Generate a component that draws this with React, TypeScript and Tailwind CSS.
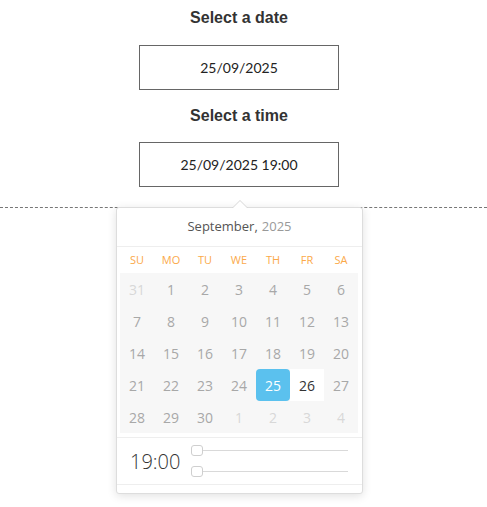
import React from "react";

const dayNames = ["SU", "MO", "TU", "WE", "TH", "FR", "SA"];
const weeks: { d: number; out?: boolean }[][] = [
  [{ d: 31, out: true }, { d: 1 }, { d: 2 }, { d: 3 }, { d: 4 }, { d: 5 }, { d: 6 }],
  [{ d: 7 }, { d: 8 }, { d: 9 }, { d: 10 }, { d: 11 }, { d: 12 }, { d: 13 }],
  [{ d: 14 }, { d: 15 }, { d: 16 }, { d: 17 }, { d: 18 }, { d: 19 }, { d: 20 }],
  [{ d: 21 }, { d: 22 }, { d: 23 }, { d: 24 }, { d: 25 }, { d: 26 }, { d: 27 }],
  [{ d: 28 }, { d: 29 }, { d: 30 }, { d: 1, out: true }, { d: 2, out: true }, { d: 3, out: true }, { d: 4, out: true }],
];

function Slider() {
  return (
    <div className="flex items-center h-[11px]">
      <div className="w-[12px] h-[11px] rounded-[3px] border border-[#cfcfcf] bg-white shrink-0" />
      <div className="h-px bg-[#d9d9d9] w-[145px]" />
    </div>
  );
}

export default function App() {
  return (
    <div className="relative w-[487px] h-[507px] bg-white overflow-hidden" style={{ fontFamily: "'Liberation Sans', Arial, sans-serif" }}>
      <div className="w-full border-b border-dashed border-[#777] pb-[20px]">
        <div className="w-[478px] flex flex-col items-center">
          <div className="pt-[8px] text-[16px] leading-[20px] font-bold text-[#333]">Select a date</div>
          <div
            className="mt-[17px] w-[200px] h-[45px] border border-[#666] flex items-center justify-center text-[14px] text-[#222]"
            style={{ fontFamily: "Lato, sans-serif" }}
          >
            25/09/2025
          </div>
          <div className="mt-[16px] text-[16px] leading-[20px] font-bold text-[#333]">Select a time</div>
          <div
            className="mt-[16px] w-[200px] h-[45px] border border-[#666] flex items-center justify-center text-[14px] text-[#222]"
            style={{ fontFamily: "Lato, sans-serif" }}
          >
            25/09/2025 19:00
          </div>
        </div>
      </div>

      <div
        className="absolute left-[116px] top-[207px] w-[247px] h-[287px] bg-white border border-[#ddd] rounded-[3px] shadow-[0_2px_10px_rgba(0,0,0,0.12)]"
        style={{ fontFamily: "'Open Sans', 'Noto Sans', sans-serif" }}
      >
        <div className="absolute left-[115px] top-[-8px] w-0 h-0 border-l-[8px] border-r-[8px] border-b-[8px] border-l-transparent border-r-transparent border-b-[#d6d6d6]" />
        <div className="absolute left-[116px] top-[-7px] w-0 h-0 border-l-[7px] border-r-[7px] border-b-[7px] border-l-transparent border-r-transparent border-b-white" />

        <div className="h-[39px] flex items-center justify-center border-b border-[#eee] text-[13px]">
          <span className="text-[#555]">September,</span>
          <span className="text-[#999] ml-[4px]">2025</span>
        </div>

        <div className="px-[3px]">
          <div className="grid grid-cols-7 w-[238px] h-[26px] items-center pt-[1px]">
            {dayNames.map((n) => (
              <div key={n} className="text-center text-[11px] text-[#fba94a]">{n}</div>
            ))}
          </div>
          <div className="w-[238px] bg-[#f7f7f7]">
            {weeks.map((w, i) => (
              <div key={i} className="grid grid-cols-7 h-[32px]">
                {w.map((c, j) => {
                  const sel = !c.out && c.d === 25;
                  const next = !c.out && c.d === 26;
                  return (
                    <div
                      key={j}
                      className={
                        "flex items-center justify-center text-[14px] " +
                        (sel
                          ? "bg-[#5bc1ee] text-white rounded-[4px]"
                          : next
                          ? "bg-white text-[#333]"
                          : c.out
                          ? "text-[#d8d8d8]"
                          : "text-[#a8a8a8]")
                      }
                    >
                      {c.d}
                    </div>
                  );
                })}
              </div>
            ))}
          </div>
        </div>

        <div className="mt-[4px] border-t border-[#eee] h-[48px] flex items-center border-b">
          <div className="w-[75px] pl-[13px] pt-[1px] text-[20px] font-light text-[#333] leading-none">19:00</div>
          <div className="flex flex-col gap-[10px] ml-[-1px]">
            <Slider />
            <Slider />
          </div>
        </div>
      </div>
    </div>
  );
}
